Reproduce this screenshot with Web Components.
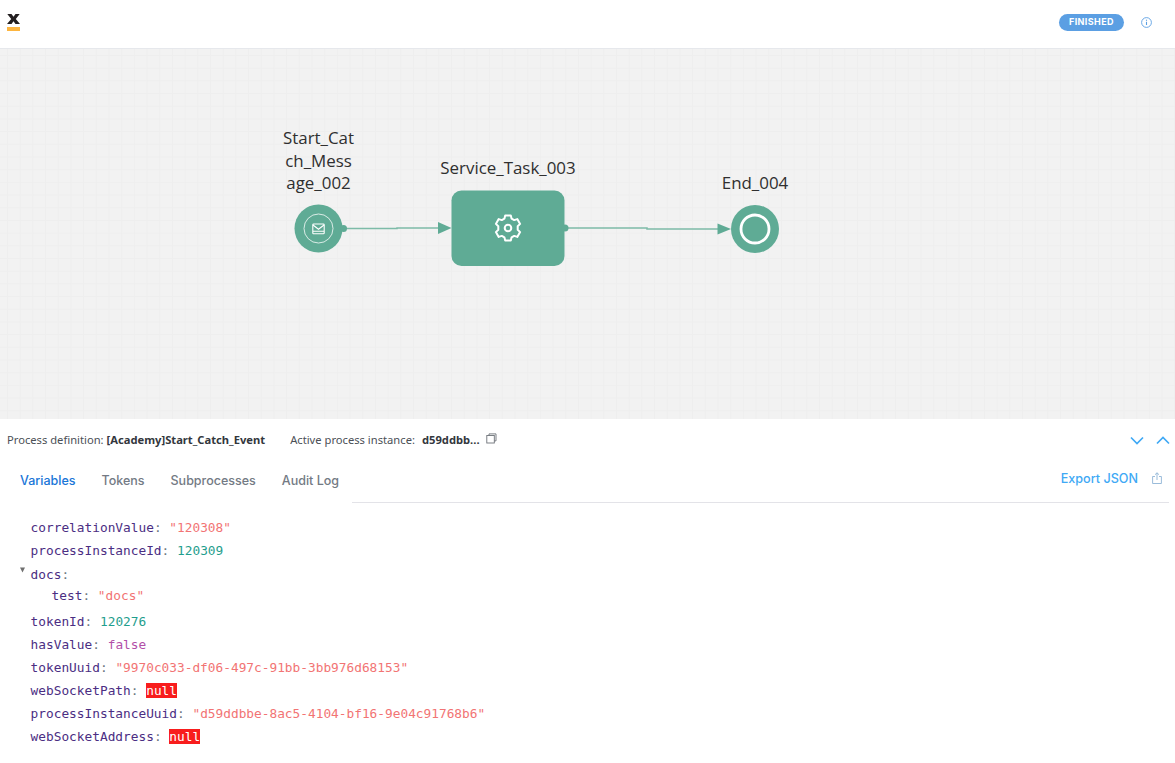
<!DOCTYPE html>
<html>
<head>
<meta charset="utf-8">
<title>Process instance</title>
<style>
    html, body { margin: 0; padding: 0; background: #fff; }
    body { width: 1175px; height: 763px; overflow: hidden; display: flex; flex-direction: column; }
</style>
</head>
<body>
<top-bar status="FINISHED"></top-bar>
<process-canvas></process-canvas>
<process-panel definition="[Academy]Start_Catch_Event" instance="d59ddbb...">
    <json-row key="correlationValue" value="&quot;120308&quot;" type="string"></json-row>
    <json-row key="processInstanceId" value="120309" type="number"></json-row>
    <json-row key="docs" type="object">
        <json-row key="test" value="&quot;docs&quot;" type="string" nested></json-row>
    </json-row>
    <json-row key="tokenId" value="120276" type="number"></json-row>
    <json-row key="hasValue" value="false" type="boolean"></json-row>
    <json-row key="tokenUuid" value="&quot;9970c033-df06-497c-91bb-3bb976d68153&quot;" type="string"></json-row>
    <json-row key="webSocketPath" value="null" type="null"></json-row>
    <json-row key="processInstanceUuid" value="&quot;d59ddbbe-8ac5-4104-bf16-9e04c91768b6&quot;" type="string"></json-row>
    <json-row key="webSocketAddress" value="null" type="null"></json-row>
</process-panel>

<script>
class TopBar extends HTMLElement {
    connectedCallback() {
        this.attachShadow({ mode: 'open' });
        this.shadowRoot.innerHTML = `
            <style>
                :host {
                    display: flex;
                    flex: none;
                    align-items: center;
                    justify-content: space-between;
                    height: 48px;
                    border-bottom: 1px solid #e6e8ec;
                    background: #fff;
                    font-family: Inter, "Liberation Sans", sans-serif;
                }
                .logo { display: block; margin-left: 7px; margin-top: -3px; }
                .right { display: flex; align-items: center; margin-top: -4px; margin-right: 23px; }
                .status {
                    display: block;
                    width: 65px;
                    height: 17px;
                    line-height: 16px;
                    text-align: center;
                    border-radius: 9px;
                    background: #5b9fe3;
                    color: #fff;
                    font-size: 9px;
                    font-weight: 700;
                    letter-spacing: .4px;
                }
                .info { display: block; margin-left: 17px; }
            </style>
            <svg class="logo" width="13" height="18" viewBox="0 0 13 18">
                <path d="M.3 0h4.200L6.500 2.800 8.500 0h4.200L8.800 5l4.200 5H8.500L6.500 7.200 4.500 10H0l4.200-5z" fill="#231f20"/>
                <rect x="0" y="13" width="13" height="4" fill="#fdb53f"/>
            </svg>
            <div class="right">
                <span class="status">${this.getAttribute('status')}</span>
                <svg class="info" width="11" height="11" viewBox="0 0 11 11" fill="none" stroke="#5b9fe3">
                    <circle cx="5.500" cy="5.500" r="4.900" stroke-width=".9"/>
                    <path d="M5.500 4.800v3.200" stroke-width="1.100"/>
                    <path d="M5.500 2.700v1.100" stroke-width="1.100"/>
                </svg>
            </div>
        `;
    }
}

class ProcessCanvas extends HTMLElement {
    connectedCallback() {
        this.attachShadow({ mode: 'open' });
        this.shadowRoot.innerHTML = `
            <style>
                :host {
                    display: block;
                    position: relative;
                    flex: none;
                    height: 370px;
                    overflow: hidden;
                    background-color: #f2f2f2;
                    background-image:
                        linear-gradient(to right, #eeeeee 1px, transparent 1px),
                        linear-gradient(to bottom, #eeeeee 1px, transparent 1px);
                    background-size: 12.700px 12.700px;
                    background-position: 7px 6px;
                    font-family: "Open Sans", "Noto Sans", sans-serif;
                    font-size: 16.900px;
                    line-height: 22.500px;
                    color: #2f2f2f;
                }
                svg { position: absolute; left: 0; top: 0; }
                .label { position: absolute; text-align: center; white-space: nowrap; transform: translateX(-50%); }
            </style>
            <svg width="1175" height="370" viewBox="0 49 1175 370">
                <g stroke="#7dbba8" stroke-width="1.500" fill="none">
                    <path d="M343 228.500H397V228H440"/>
                    <path d="M565 228H647V229H720"/>
                </g>
                <g fill="#5fab95">
                    <circle cx="318.500" cy="228.500" r="24"/>
                    <circle cx="343.500" cy="228.500" r="3.500"/>
                    <path d="M438 222l13.500 6-13.500 6z"/>
                    <rect x="451.500" y="190.500" width="113" height="75.500" rx="10"/>
                    <circle cx="565" cy="228" r="3.500"/>
                    <path d="M717.500 223.500l13.500 5.500-13.500 5.500z"/>
                    <circle cx="755" cy="229" r="24"/>
                </g>
                <g fill="none" stroke="#fff">
                    <circle cx="318.500" cy="228.500" r="14.500" stroke-width=".9" opacity=".85"/>
                    <path d="M313.700 224h9.600a.9.9 0 0 1 .9.900v8a.9.9 0 0 1-.9.900h-9.600a.9.9 0 0 1-.9-.900v-8a.9.9 0 0 1 .9-.900z" stroke-width="1.100"/>
                    <path d="M313 225l5.500 4.200 5.500-4.200M313 231.300h11" stroke-width="1.100"/>
                    <circle cx="755" cy="229" r="14" stroke-width="2.800"/>
                    <g stroke-width="2" stroke-linejoin="round">
                        <path d="M505.200 215.500h5.600l.8 3.200 2.600 1.400 3.100-1 2.800 4.800-2.400 2.300v3.600l2.400 2.300-2.800 4.800-3.100-1-2.600 1.400-.8 3.200h-5.600l-.8-3.200-2.600-1.400-3.100 1-2.800-4.800 2.400-2.300v-3.600l-2.400-2.300 2.800-4.800 3.100 1 2.600-1.400z"/>
                        <circle cx="508" cy="228" r="3.300"/>
                    </g>
                </g>
            </svg>
            <div class="label" style="left:318.500px;top:78px">Start_Cat<br>ch_Mess<br>age_002</div>
            <div class="label" style="left:508px;top:108px">Service_Task_003</div>
            <div class="label" style="left:755px;top:123px">End_004</div>
        `;
    }
}

class ProcessPanel extends HTMLElement {
    connectedCallback() {
        this.attachShadow({ mode: 'open' });
        this.shadowRoot.innerHTML = `
            <style>
                :host {
                    display: block;
                    flex: 1;
                    background: #fff;
                    font-family: "Noto Sans", "Open Sans", sans-serif;
                }
                .info {
                    display: flex;
                    align-items: center;
                    height: 41px;
                    padding: 0 5px 0 7px;
                    font-size: 11.200px;
                    color: #4b4f56;
                }
                .info b { color: #33373d; font-weight: 700; }
                .gap { margin-left: 25px; }
                .val { margin-left: 7px; }
                .copy { margin-left: 6px; margin-top: -3px; }
                .arrows { margin-left: auto; display: flex; gap: 12px; margin-top: 2px; }
                .arrows svg { display: block; }
                .tabs { display: flex; height: 43px; padding-right: 6px; }
                .tab-list { display: flex; align-items: center; gap: 26px; padding-left: 20px; width: 352px; flex: none; padding-bottom: 2px; box-sizing: border-box; white-space: nowrap; }
                .tab {
                    font-family: Inter, "Liberation Sans", sans-serif;
                    font-size: 12.500px;
                    font-weight: 500;
                    color: #737a84;
                }
                .tab.active { color: #1a76d8; }
                .tab-rest {
                    flex: 1;
                    display: flex;
                    align-items: center;
                    justify-content: flex-end;
                    border-bottom: 1px solid #e3e3e8;
                    padding-bottom: 6px;
                    padding-right: 7px;
                    font-family: Inter, "Liberation Sans", sans-serif;
                    font-size: 12.600px;
                    font-weight: 500;
                    color: #40a9f5;
                }
                .tab-rest svg { margin-left: 14px; }
                .body { display: block; padding: 13px 0 0 30.600px; }
            </style>
            <div class="info">
                <span>Process definition: <b>${this.getAttribute('definition')}</b></span>
                <span class="gap">Active process instance:</span>
                <b class="val">${this.getAttribute('instance')}</b>
                <svg class="copy" width="11" height="11" viewBox="0 0 11 11" fill="none" stroke="#6d7278" stroke-width=".9">
                    <rect x=".8" y="2.500" width="7.500" height="7.500"/>
                    <path d="M3 2.500V.9h7v7H8.300"/>
                </svg>
                <div class="arrows">
                    <svg width="14" height="9" viewBox="0 0 14 9" fill="none" stroke="#40a9f5" stroke-width="1.700"><path d="M1 1.500l6 6 6-6"/></svg>
                    <svg width="14" height="9" viewBox="0 0 14 9" fill="none" stroke="#40a9f5" stroke-width="1.700"><path d="M1 7.500l6-6 6 6"/></svg>
                </div>
            </div>
            <div class="tabs">
                <div class="tab-list">
                    <span class="tab active">Variables</span>
                    <span class="tab">Tokens</span>
                    <span class="tab">Subprocesses</span>
                    <span class="tab">Audit Log</span>
                </div>
                <div class="tab-rest">
                    <span>Export JSON</span>
                    <svg width="10" height="12" viewBox="0 0 10 12" fill="none" stroke="#8fb4d6" stroke-width=".9">
                        <path d="M3 4.500H.6v7h8.800v-7H7"/>
                        <path d="M5 8V.8M3 2.700L5 .8l2 1.900"/>
                    </svg>
                </div>
            </div>
            <div class="body"><slot></slot></div>
        `;
    }
}

class JsonRow extends HTMLElement {
    connectedCallback() {
        const type = this.getAttribute('type');
        const value = this.getAttribute('value');
        const caret = type === 'object' ? '<svg class="caret" width="5" height="6" viewBox="0 0 5 6"><path d="M0 .5h5L2.500 5.500z" fill="#6f6f6f"/></svg>' : '';
        const val = value ? ` <span class="${type}">${value}</span>` : '';
        this.attachShadow({ mode: 'open' });
        this.shadowRoot.innerHTML = `<style>
                :host {
                    display: block;
                    position: relative;
                    font-family: "DejaVu Sans Mono", monospace;
                    font-size: 12.800px;
                    line-height: 23px;
                    color: #4b2e83;
                }
                :host([type="object"]) { padding-top: 1px; padding-bottom: 3px; }
                :host([nested]) { margin-left: 21px; margin-top: -2px; }
                .line { display: block; white-space: pre; }
                .colon { color: #6b7680; }
                .string { color: #f27474; }
                .number { color: #1f9e8d; }
                .boolean { color: #b24fa8; }
                .null { background: #f81d1d; color: #fff; display: inline-block; line-height: 15px; }
                .caret { position: absolute; left: -11px; top: 5px; }
            </style>${caret}<div class="line"><span>${this.getAttribute('key')}</span><span class="colon">:</span>${val}</div><slot></slot>`;
    }
}

customElements.define('top-bar', TopBar);
customElements.define('process-canvas', ProcessCanvas);
customElements.define('process-panel', ProcessPanel);
customElements.define('json-row', JsonRow);
</script>
</body>
</html>
